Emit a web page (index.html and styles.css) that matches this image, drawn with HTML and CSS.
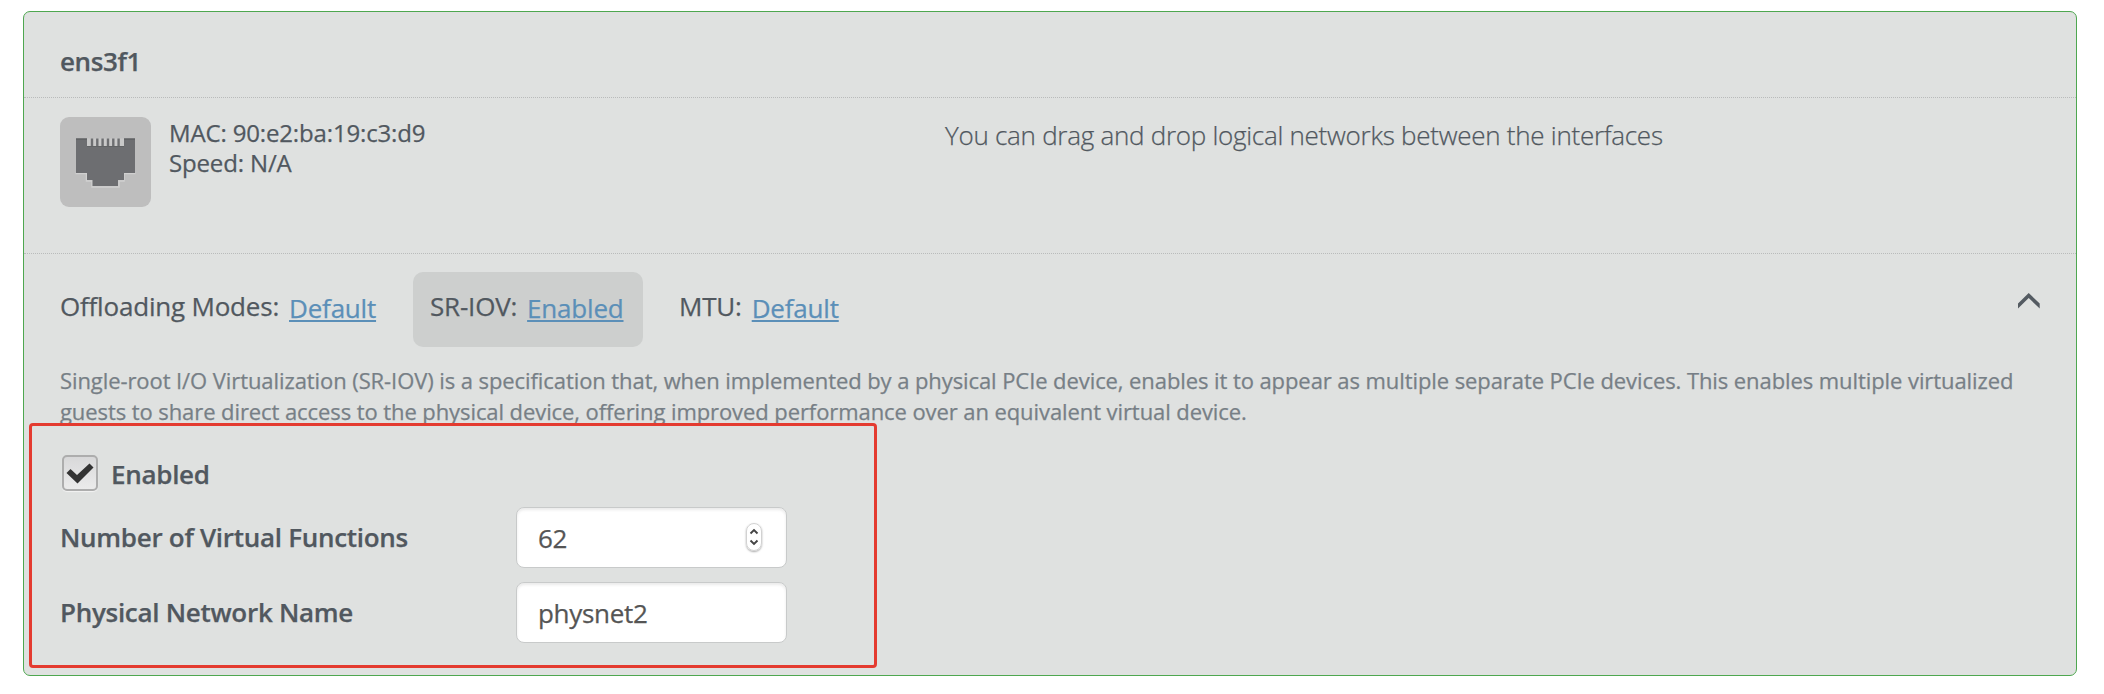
FILE: index.html
```html
<!DOCTYPE html>
<html lang="en">
<head>
<meta charset="utf-8">
<title>Network interface</title>
<link rel="stylesheet" href="styles.css">
</head>
<body>
<section class="panel">
  <header class="panel-head">ens3f1</header>
  <div class="info">
    <svg class="port" width="91" height="90" viewBox="0 0 91 90">
      <rect width="91" height="90" rx="9" fill="#bebebe"/>
      <path d="M15.500 56.500H26.500V64H32V70H59V64H64V56.500H75.500" fill="none" stroke="#d0d0d0" stroke-width="1.500"/>
      <path d="M16 21.500H27V29H64V21.500H75V56H64V63H58V69H32.500V63H27V56H16Z" fill="#6d6e71"/>
      <path d="M16 22H27M64 22H75M27 29H64" stroke="#57585b" stroke-width="1"/>
      <path d="M27 21.500H64V29H27Z" fill="#c8c8c8"/>
      <path d="M32 21.500V29M37.300 21.500V29M42.600 21.500V29M48 21.500V29M53.300 21.500V29M58.600 21.500V29" stroke="#6d6e71" stroke-width="2.400"/>
    </svg>
    <div class="specs"><div>MAC: 90:e2:ba:19:c3:d9</div><div>Speed: N/A</div></div>
    <p class="hint">You can drag and drop logical networks between the interfaces</p>
  </div>
  <div class="settings">
    <nav class="tabs">
      <div class="tab"><span>Offloading Modes:</span><a>Default</a></div>
      <div class="tab active"><span>SR-IOV:</span><a>Enabled</a></div>
      <div class="tab"><span>MTU:</span><a>Default</a></div>
      <svg class="chevron" width="24" height="18" viewBox="0 0 24 18"><path d="M1 16.500V11.500L11.700 1L22.700 11.500V16.500L11.700 6Z" fill="#545b62"/></svg>
    </nav>
    <p class="desc">Single-root I/O Virtualization (SR-IOV) is a specification that, when implemented by a physical PCIe device, enables it to appear as multiple separate PCIe devices. This enables multiple virtualized<br>guests to share direct access to the physical device, offering improved performance over an equivalent virtual device.</p>
    <div class="form">
      <div class="check-row">
        <span class="checkbox"><svg width="28" height="21" viewBox="0 0 28 21"><path d="M0.500 10L4.500 6L11 12L23.500 0.500L27.500 4.500L11.500 20.500Z" fill="#333"/></svg></span>
        <span class="label">Enabled</span>
      </div>
      <div class="field"><span class="label">Number of Virtual Functions</span>
        <div class="input"><span>62</span>
          <span class="stepper"><svg width="10" height="18" viewBox="0 0 10 18"><path d="M1.500 5.500L5 2L8.500 5.500M1.500 12.500L5 16L8.500 12.500" fill="none" stroke="#444" stroke-width="1.900"/></svg></span>
        </div>
      </div>
      <div class="field"><span class="label">Physical Network Name</span><div class="input"><span>physnet2</span></div></div>
    </div>
  </div>
  <div class="highlight"></div>
</section>
</body>
</html>
```
FILE: styles.css
```css
* { box-sizing: border-box; }
body { margin: 0; padding: 11px 27px 0 23px; height: 694px; background: #fff; font-family: "Open Sans", sans-serif; color: #51585f; -webkit-text-stroke: 0.25px; }
p { margin: 0; }
.panel { position: relative; height: 665px; border: 1px solid #4ea750; border-radius: 7px; background: #dfe1e0; }
.panel-head { height: 86px; padding: 31px 36px 0; border-bottom: 1px dotted #b9bbbb; font-size: 26px; line-height: 36px; font-weight: 600; letter-spacing: -0.4px; }
.info { display: flex; height: 156px; padding: 19px 36px 0; border-bottom: 1px dotted #b9bbbb; }
.port { flex: none; }
.specs { width: 794px; padding: 1px 0 0 18px; font-size: 24px; line-height: 30px; letter-spacing: -0.15px; white-space: nowrap; }
.hint { font-size: 26px; font-weight: 300; line-height: 36px; letter-spacing: -0.27px; white-space: nowrap; }
.settings { padding: 18px 36px 0; }
.tabs { display: flex; height: 75px; }
.tab { display: flex; align-items: flex-start; height: 75px; padding: 16px 0 0 17px; border-radius: 10px; font-size: 26px; line-height: 36px; letter-spacing: -0.2px; white-space: nowrap; }
.tab:first-child { padding-left: 0; width: 353px; }
.tab.active { background: #cdcfce; margin-right: 19px; width: 230px; }
.tab a { margin: 2px 0 0 10px; color: #5b8fb8; text-decoration: underline; text-decoration-thickness: 2px; text-underline-offset: 2px; }
.chevron { margin: 20px -1px 0 auto; }
.desc { margin-top: 18px; font-size: 22px; line-height: 31px; letter-spacing: -0.083px; color: #777f86; white-space: nowrap; }
.form { padding-top: 28px; }
.check-row { display: flex; gap: 13px; height: 52px; padding-left: 2px; }
.check-row .label { padding-top: 1px; }
.checkbox { display: flex; align-items: flex-start; justify-content: center; width: 36px; height: 36px; padding-top: 6px; border: 2px solid #adadad; border-radius: 5px; background: linear-gradient(#d8d8d9, #ebebeb); box-shadow: 0 1px 1px #f3f3f3; }
.label { font-size: 26px; line-height: 36px; font-weight: 600; letter-spacing: -0.29px; white-space: nowrap; }
.field { display: flex; justify-content: space-between; align-items: center; width: 727px; height: 61px; margin-bottom: 14px; }
.field .label { padding-bottom: 2px; }
.input { display: flex; align-items: center; justify-content: space-between; width: 271px; height: 61px; padding: 0 24px 0 21px; border: 1px solid #c8caca; border-radius: 8px; background: #fff; box-shadow: inset 0 2px 3px #eaeaea; font-size: 26px; letter-spacing: -0.3px; color: #555; }
.stepper { display: flex; align-items: center; justify-content: center; width: 16px; height: 28px; margin-bottom: 2px; border: 1px solid #d2d2d2; border-radius: 8px; box-shadow: 0 1px 2px #aaa; }
.highlight { position: absolute; left: 5px; top: 411px; width: 848px; height: 245px; border: 3px solid #e43b30; border-radius: 4px; }
```
